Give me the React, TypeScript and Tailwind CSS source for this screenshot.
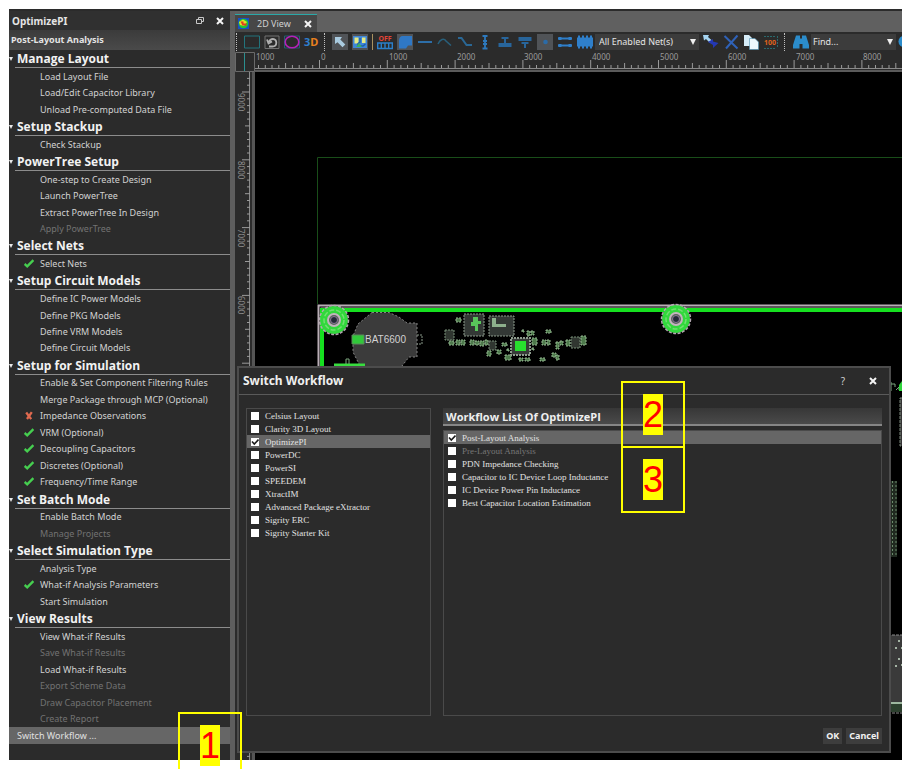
import { useState, type ReactNode } from 'react';
import clsx from 'clsx';

type Status = 'ok' | 'error';

interface Step {
  label: string;
  status?: Status;
  disabled?: boolean;
}

interface StepGroup {
  title: string;
  steps: Step[];
}

const groups: StepGroup[] = [
  {
    title: 'Manage Layout',
    steps: [
      { label: 'Load Layout File' },
      { label: 'Load/Edit Capacitor Library' },
      { label: 'Unload Pre-computed Data File' },
    ],
  },
  { title: 'Setup Stackup', steps: [{ label: 'Check Stackup' }] },
  {
    title: 'PowerTree Setup',
    steps: [
      { label: 'One-step to Create Design' },
      { label: 'Launch PowerTree' },
      { label: 'Extract PowerTree In Design' },
      { label: 'Apply PowerTree', disabled: true },
    ],
  },
  { title: 'Select Nets', steps: [{ label: 'Select Nets', status: 'ok' }] },
  {
    title: 'Setup Circuit Models',
    steps: [
      { label: 'Define IC Power Models' },
      { label: 'Define PKG Models' },
      { label: 'Define VRM Models' },
      { label: 'Define Circuit Models' },
    ],
  },
  {
    title: 'Setup for Simulation',
    steps: [
      { label: 'Enable & Set Component Filtering Rules' },
      { label: 'Merge Package through MCP (Optional)' },
      { label: 'Impedance Observations', status: 'error' },
      { label: 'VRM (Optional)', status: 'ok' },
      { label: 'Decoupling Capacitors', status: 'ok' },
      { label: 'Discretes (Optional)', status: 'ok' },
      { label: 'Frequency/Time Range', status: 'ok' },
    ],
  },
  {
    title: 'Set Batch Mode',
    steps: [{ label: 'Enable Batch Mode' }, { label: 'Manage Projects', disabled: true }],
  },
  {
    title: 'Select Simulation Type',
    steps: [
      { label: 'Analysis Type' },
      { label: 'What-if Analysis Parameters', status: 'ok' },
      { label: 'Start Simulation' },
    ],
  },
  {
    title: 'View Results',
    steps: [
      { label: 'View What-if Results' },
      { label: 'Save What-if Results', disabled: true },
      { label: 'Load What-if Results' },
      { label: 'Export Scheme Data', disabled: true },
      { label: 'Draw Capacitor Placement', disabled: true },
      { label: 'Create Report', disabled: true },
    ],
  },
];

const products = [
  'Celsius Layout',
  'Clarity 3D Layout',
  'OptimizePI',
  'PowerDC',
  'PowerSI',
  'SPEEDEM',
  'XtractIM',
  'Advanced Package eXtractor',
  'Sigrity ERC',
  'Sigrity Starter Kit',
];

const workflows = [
  'Post-Layout Analysis',
  'Pre-Layout Analysis',
  'PDN Impedance Checking',
  'Capacitor to IC Device Loop Inductance',
  'IC Device Power Pin Inductance',
  'Best Capacitor Location Estimation',
];

function CloseIcon() {
  return (
    <svg viewBox="0 0 8 8" className="h-2 w-2" stroke="#f4f4f4" strokeWidth="2" aria-hidden="true">
      <path d="M1 1l6 6M7 1L1 7" />
    </svg>
  );
}

function StatusIcon({ status }: { status?: Status }) {
  return (
    <svg viewBox="0 0 10 10" className="h-[10px] w-[10px] shrink-0" fill="none" aria-hidden="true">
      {status === 'ok' && <path d="M.6 5L3.200 7.300 9.400 1.200" stroke="#46cf50" strokeWidth="2.400" />}
      {status === 'error' && (
        <path d="M2.200 1.500l5 6.600M7.800 1.200L3 8" stroke="#e0694f" strokeWidth="2.300" />
      )}
    </svg>
  );
}

function StepSection({ group }: { group: StepGroup }) {
  const [open, setOpen] = useState(true);

  return (
    <section className="contents">
      <h2 className="flex shrink-0 grow basis-[18px]">
        <button
          onClick={() => setOpen(!open)}
          aria-expanded={open}
          className='flex flex-1 items-stretch text-left font-["Open_Sans",sans-serif] text-[12px] leading-[18px] font-bold text-[#f2f2f2]'
        >
          <svg viewBox="0 0 6 18" className="h-[18px] w-[6px]" fill="#e8e8e8" aria-hidden="true">
            <path d="M0 7h4L2 11z" />
          </svg>
          <span className="h-[18px] flex-1 border-b border-[#8c8c8c] pl-[2px]">{group.title}</span>
        </button>
      </h2>
      {open && (
        <ul className="contents">
          {group.steps.map((step) => (
            <li key={step.label} className="flex shrink-0 grow basis-4">
              <button
                disabled={step.disabled}
                className="flex flex-1 items-center gap-[6px] pl-[15px] text-[9px] leading-4 text-[#d2d2d2] disabled:text-[#727272]"
              >
                <StatusIcon status={step.status} />
                {step.label}
              </button>
            </li>
          ))}
        </ul>
      )}
    </section>
  );
}

function Sidebar({ onSwitch }: { onSwitch: () => void }) {
  return (
    <aside className="flex w-[226px] shrink-0 flex-col border-r-5 border-[#5e5e5e] bg-[#2b2b2b]">
      <header className="flex h-[19px] items-center gap-3 bg-[#303030] pr-[6px] pl-[3px]">
        <h1 className="flex-1 text-[10px] leading-4 font-bold text-[#e4e4e4]">OptimizePI</h1>
        <button aria-label="Float panel">
          <svg viewBox="0 0 8 8" className="h-2 w-2" fill="none" stroke="#c8c8c8" aria-hidden="true">
            <path d="M2.500 2V.5h5v4H6M.5 2.500h5v4h-5z" />
          </svg>
        </button>
        <button aria-label="Close panel">
          <CloseIcon />
        </button>
      </header>
      <p className="h-[20px] bg-linear-to-b from-[#3b3b3b] to-[#4a4a4a] pl-[2px] text-[9px] leading-5 font-bold text-[#e4e4e4]">
        Post-Layout Analysis
      </p>
      <nav className="flex flex-1 flex-col pb-4">
        {groups.map((group) => (
          <StepSection key={group.title} group={group} />
        ))}
        <button
          onClick={onSwitch}
          className="shrink-0 grow basis-4 bg-[#666] pl-2 text-left text-[9px] leading-4 text-[#e0e0e0]"
        >
          Switch Workflow ...
        </button>
      </nav>
    </aside>
  );
}

interface ToolProps {
  label: string;
  pressed?: boolean;
  children: ReactNode;
}

function Tool({ label, pressed, children }: ToolProps) {
  return (
    <button aria-label={label} className={clsx('h-4 w-4 shrink-0', pressed && 'bg-[#505357]')}>
      <svg viewBox="0 0 16 16" className="h-4 w-4" fill="none" aria-hidden="true">
        {children}
      </svg>
    </button>
  );
}

function Handle() {
  return <span className="h-[18px] w-px shrink-0 border-l border-dotted border-[#c0c0c0]" />;
}

function DropArrow() {
  return (
    <svg viewBox="0 0 6 6" className="h-[6px] w-[6px]" fill="#f0f0f0" aria-hidden="true">
      <path d="M0 0h6L3 6z" />
    </svg>
  );
}

function Toolbar() {
  return (
    <div className="flex h-[20px] items-center gap-1 overflow-hidden bg-[#2b2b2b] pl-[1px]">
      <Handle />
      <span className="flex items-center gap-1 pl-[3px]">
        <Tool label="Select rectangle">
          <path d="M.5 2h15v12H.5z" stroke="#23747c" />
        </Tool>
        <Tool label="Undo">
          <path d="M1 2h14v12.500H1z" stroke="#727272" />
          <path d="M5 12.500h3.500c5 0 5-7.500.5-7.500-2.500 0-3.500 1.500-4 3M3 5.500l1.500 4 3.500-2" stroke="#b0b0b0" strokeWidth="1.800" />
        </Tool>
        <Tool label="Select ellipse">
          <path d="M.5 2h15v12H.5z" stroke="#245d72" />
          <ellipse cx="8" cy="8" rx="6.800" ry="5.800" stroke="#b521b8" strokeWidth="1.600" />
        </Tool>
        <button aria-label="3D view" className="flex h-4 w-4 text-[11px] leading-4 font-bold">
          <span className="text-[#2e7fd0]">3</span>
          <span className="text-[#e8801e]">D</span>
        </button>
      </span>
      <Handle />
      <span className="flex items-center gap-1 pl-[3px]">
        <Tool label="Pointer" pressed>
          <path d="M3 3h7L8.300 5.400l5 5-2.800 2.800-5-5L3 10z" fill="#a9cbe0" />
        </Tool>
        <Tool label="Layout" pressed>
          <path d="M1 2h14v12H1z" fill="#3f86d8" />
          <path d="M2.500 3.500h4v6h-4zM10 3.500h3.500V9H10z" fill="#e4ea86" />
          <path d="M8 4v4l-2 1.500V12h5l2.500-2" stroke="#1f5fa8" strokeWidth="1.500" />
          <path d="M4 13l3-4 3 4z" fill="#3cae62" />
        </Tool>
      </span>
      <span className="h-4 w-px shrink-0 bg-[#a8915f]" />
      <span className="flex items-center gap-1">
        <Tool label="Traces off">
          <text x="8" y="7" textAnchor="middle" fontSize="7" fontWeight="700" fill="#e04438">
            OFF
          </text>
          <path d="M.7 9h14.600v5.500H.7zM4.300 9v5.500M8 9v5.500M11.700 9v5.500" stroke="#2b7fca" strokeWidth="1.400" />
        </Tool>
        <Tool label="Shape" pressed>
          <path d="M5.500 2H15v9.500h-4L9 14.500H2V6.500C2 4 3.500 2 5.500 2z" fill="#2f78c6" />
        </Tool>
        <Tool label="Line">
          <path d="M1 8h14" stroke="#2d6ea8" strokeWidth="2" />
        </Tool>
        <Tool label="Arc">
          <path d="M1 10c2-5 6-6 8-3l5 4.500" stroke="#28607c" strokeWidth="1.500" />
        </Tool>
        <Tool label="Curve">
          <path d="M1 4h3.500l5 7H15" stroke="#2a6795" strokeWidth="2" />
        </Tool>
        <Tool label="Via">
          <path d="M8 2v13M5.500 2h5M5.500 14.500h5M6 7h4M6 10h4" stroke="#2d79bd" strokeWidth="1.800" />
        </Tool>
        <Tool label="Top layer">
          <path d="M1.500 9h13v4h-13zM4.500 3h7v2h-7zM7 5h2v4H7z" fill="#28659b" />
        </Tool>
        <Tool label="Bottom layer">
          <path d="M1.500 3h13v4h-13zM4.500 8h7v2h-7zM7 10h2v4H7z" fill="#28659b" />
        </Tool>
        <Tool label="Node" pressed>
          <circle cx="8.500" cy="8" r="2.300" fill="#2b6ba8" />
        </Tool>
        <Tool label="Net pair">
          <path d="M1 4.500h14M1 11.500h14" stroke="#2f7fca" strokeWidth="2" />
          <path d="M1.500 3h3v3h-3zM11.500 3h3v3h-3zM1.500 10h3v3h-3zM11.500 10h3v3h-3z" fill="#2f7fca" />
        </Tool>
        <Tool label="Component">
          <path d="M0 3.500h16v9H0z" fill="#2f7fca" />
          <path d="M2 1.500v13M6 1.500v13M10 1.500v13M14 1.500v13" stroke="#2f7fca" strokeWidth="2" />
        </Tool>
      </span>
      <span className="relative -ml-[2px] flex h-4 w-[104px] shrink-0 items-center">
        <select
          aria-label="Nets"
          className="h-4 w-full appearance-none bg-[#3c3c3c] pl-1 text-[9px] leading-4 text-[#e4e4e4]"
        >
          <option>All Enabled Net(s)</option>
          <option>All Nets</option>
        </select>
        <span className="pointer-events-none absolute right-[3px]">
          <DropArrow />
        </span>
      </span>
      <span className="flex items-center gap-1 pr-px">
        <Tool label="Link nets">
          <path d="M0 1h6L5 3l4 3.500L7 9 3 5 1 6.500z" fill="#a5d3f0" />
          <path d="M5 8l5-3v2.500l5.500 1.500-5.500 5v-3z" fill="#2438b4" />
        </Tool>
        <Tool label="Delete">
          <path d="M1.500 2l13 12.500M14.500 1.500L3 14.500" stroke="#2f62b8" strokeWidth="2" />
        </Tool>
        <Tool label="Copy">
          <path d="M1 1h5l3 3v8H1z" fill="#d5ecf8" />
          <path d="M6.500 4.500H12L15.500 8v7.500h-9z" fill="#eef8fd" stroke="#4a8fb0" strokeWidth=".6" />
        </Tool>
        <Tool label="Scale 100">
          <path d="M1 2.500h12M14.500 2v12M1 14.500h12" stroke="#2a6a6e" strokeDasharray="2 1" />
          <text x="7" y="11" textAnchor="middle" fontSize="7" fontWeight="700" fill="#e0641c">
            100
          </text>
        </Tool>
      </span>
      <Handle />
      <span className="flex min-w-0 flex-1 items-center gap-[2px] pl-[4px]">
        <svg viewBox="0 0 16 16" className="h-4 w-4 shrink-0" fill="#2b8ccb" aria-hidden="true">
          <path d="M3 1.500h4v3h2v-3h4l3 9.500v3.500H9.500V10h-3v4.500H0V11z" />
        </svg>
        <span className="flex h-4 min-w-0 flex-1 items-center bg-[#3c3c3c] pr-[3px]">
          <input
            aria-label="Find"
            placeholder="Find..."
            className="h-4 w-full min-w-0 flex-1 pl-[2px] text-[9px] leading-4 text-[#e4e4e4] outline-none placeholder:text-[#e4e4e4]"
          />
          <button aria-label="Recent searches" className="shrink-0">
            <DropArrow />
          </button>
        </span>
        <svg viewBox="0 0 4 16" className="h-4 w-[4px] shrink-0" fill="#2b8ccb" aria-hidden="true">
          <circle cx="6" cy="7.500" r="5.500" />
        </svg>
      </span>
    </div>
  );
}

// one thousand mils on screen
const UNIT = 67.8;

function tickHeight(i: number) {
  if (i % 10 === 0) return 8;
  return i % 5 === 0 ? 5 : 3;
}

function TopRuler() {
  const ticks = Array.from({ length: 240 }, (_, i) => i - 9);
  return (
    <svg className="h-[20px] min-w-0 flex-1 border-b-2 border-[#5a5a5a] bg-[#2b2b2b]" aria-hidden="true">
      <path d="M0 16.500h3000" stroke="#8a8a8a" />
      {ticks.map((t) => (
        <path
          key={t}
          d={`M${(64.5 + (t * UNIT) / 10).toFixed(1)} 16v-${tickHeight(Math.abs(t))}`}
          stroke="#9a9a9a"
        />
      ))}
      <text x="1" y="8" fontSize="8" fill="#9a9a9a">1000</text>
      {Array.from({ length: 9 }, (_, i) => (
        <text key={i} x={Math.round(66 + i * UNIT)} y="8" fontSize="8" fill="#9a9a9a">
          {i * 1000}
        </text>
      ))}
    </svg>
  );
}

function LeftRuler() {
  const ticks = Array.from({ length: 200 }, (_, i) => i - 2);
  return (
    <svg className="w-[20px] shrink-0 border-r-3 border-[#555] bg-[#2b2b2b]" aria-hidden="true">
      <path d="M14.500 0v3000" stroke="#8a8a8a" />
      {ticks.map((t) => (
        <path
          key={t}
          d={`M15 ${(20 + (t * UNIT) / 10).toFixed(1)}h-${tickHeight(Math.abs(t))}`}
          stroke="#9a9a9a"
        />
      ))}
      {[9000, 8000, 7000, 6000].map((v, i) => (
        <text
          key={v}
          transform={`translate(3 ${Math.round(21 + i * UNIT)}) rotate(90)`}
          fontSize="8"
          fill="#8e8e8e"
        >
          {v}
        </text>
      ))}
    </svg>
  );
}

function MountingHole({ x, y }: { x: number; y: number }) {
  return (
    <g transform={`translate(${x} ${y})`}>
      <circle r="14" fill="#31d83c" />
      <circle r="14.500" stroke="#b5a7b2" strokeWidth="1.500" strokeDasharray="3 1.500" />
      <circle r="10" stroke="#72df70" strokeWidth="1.500" strokeDasharray="5 2" />
      <circle r="6" fill="#59645a" stroke="#c4b3bf" strokeWidth="2" />
      <circle r="3.500" fill="#252b38" stroke="#8e7b9a" />
    </g>
  );
}

// small passives: x, y, width, height
const passives = [
  [456, 318, 5, 4], [449, 341, 5, 4], [456, 340, 4, 5], [461, 340, 4, 5], [470, 340, 4, 5],
  [475, 341, 4, 4], [480, 341, 4, 5], [485, 340, 3, 5], [527, 331, 3, 5], [531, 331, 3, 4],
  [532, 338, 5, 7], [546, 330, 5, 3], [542, 340, 4, 5], [547, 340, 3, 5], [502, 343, 5, 3],
  [556, 342, 3, 7], [560, 341, 3, 4], [566, 340, 4, 6], [581, 336, 5, 9], [487, 351, 4, 5],
  [497, 350, 4, 4], [505, 355, 6, 5], [519, 358, 4, 3], [525, 358, 5, 3], [540, 358, 5, 3],
  [552, 353, 4, 4], [556, 355, 3, 5], [507, 349, 2, 2], [532, 348, 2, 2], [522, 330, 2, 2],
];

function Board() {
  return (
    <svg className="absolute inset-0 h-full w-full" fill="none" aria-hidden="true">
      <g transform="translate(-255 -72)">
        <path d="M3000 157.500H317.500V304" stroke="#194d19" />
        <path d="M3000 305.500H318.500V740" stroke="#b9aeb6" strokeWidth="2" />
        <path d="M3000 307.500H320.500" stroke="#5d545b" strokeWidth="2" />
        <path d="M3000 310H322V740" stroke="#16e020" strokeWidth="4" />

        <path
          d="M372 312.500h17l10 4.500 8 6h10v34h-8l-7 9-8 6h-26l-9-8-6-12v-16l5-12z"
          fill="#3b3b3b"
          stroke="#848484"
          strokeDasharray="2 2"
        />
        <path d="M417 335h5v9h-5" stroke="#8a9a8a" strokeDasharray="2 1" />
        <path d="M352 335h12v9h-12z" fill="#31c83a" stroke="#5b8a5b" />
        <text x="365" y="343" fontSize="10" fill="#d2d2d2" fontFamily="Liberation Sans">
          BAT6600
        </text>
        <path d="M334 365h31" stroke="#38dd3f" strokeWidth="3" />
        <path d="M346 364v-5h3v5" stroke="#7da77e" />
        <MountingHole x={334} y={320} />
        <MountingHole x={676} y={319} />

        <path d="M464 314h20v22h-20zM489 316h25v20h-25z" fill="#333835" stroke="#8e9c8e" strokeDasharray="2 1" />
        <path d="M473 317h5v14h-3v-5h-4v-4h2zM478 321h3v3h-3z" fill="#58c45a" />
        <path d="M492 318h4v6h10v3h-14z" fill="#8db08c" />
        <path d="M511 338h19v17h-19z" fill="#373c38" stroke="#8e9c8e" strokeWidth="2" strokeDasharray="2 1" />
        <path d="M515 341h11v10h-11z" fill="#28e02e" />
        <path d="M445 330h9v10h-9zM489 341h7v9h-7zM571 337h9v11h-9z" fill="#303630" stroke="#789078" strokeDasharray="2 1" />
        {passives.map(([x, y, w, h]) => (
          <g key={`${x}-${y}`}>
            <rect x={x} y={y} width={w} height={h} fill="#4e7a4c" />
            <rect x={x} y={y} width={w} height={h} stroke="#94b891" strokeDasharray="2 1" />
          </g>
        ))}

        <path d="M891 382v9M891 384h4v3M896 390l3-3v3h4" stroke="#7da77e" />
        <path d="M899 385l3-4v10h-3z" fill="#2fd63c" />
        <path d="M902 398h-2v48h2" fill="#353535" stroke="#7f8b7f" strokeDasharray="3 1" />
        <path d="M890 481h7v76h-7z" fill="#202a20" />
        <path d="M892.500 481v76M896 481v76" stroke="#6b8a6c" strokeDasharray="2 2" />
        <path d="M880 635h30v67h-30z" fill="#3a3a3a" />
        <path d="M880 635h30M880 713h30" stroke="#8b8b8b" strokeDasharray="3 1" />
        <path d="M880 702h30v10h-30z" fill="#2c402e" />
        <path d="M880 703h30" stroke="#9db79f" strokeWidth="2" />
        <path d="M898 641h2M895 648h2M901 648h1M898 659h2M895 666h2M901 665h1" stroke="#a5b5a5" strokeWidth="2" />
      </g>
    </svg>
  );
}

interface CheckRowProps {
  label: string;
  checked: boolean;
  disabled?: boolean;
  onChange: () => void;
}

function CheckRow({ label, checked, disabled, onChange }: CheckRowProps) {
  return (
    <li className={clsx('h-[13px]', checked && 'bg-[#666]')}>
      <label
        className={clsx(
          'flex h-[13px] items-center gap-[6px] pl-1 font-["Liberation_Serif",serif] text-[9px] leading-3',
          disabled ? 'text-[#777]' : 'text-[#e2e2e2]',
        )}
      >
        <span className="relative flex h-2 w-2 shrink-0">
          <input
            type="checkbox"
            checked={checked}
            disabled={disabled}
            onChange={onChange}
            className="h-2 w-2 appearance-none bg-white"
          />
          {checked && (
            <svg viewBox="0 0 8 8" className="pointer-events-none absolute inset-0 h-2 w-2" fill="none" aria-hidden="true">
              <path d="M1 3.500L3.300 6 7.500 1.500" stroke="#1d1d1d" strokeWidth="1.600" />
            </svg>
          )}
        </span>
        {label}
      </label>
    </li>
  );
}

function SwitchWorkflowDialog({ onClose }: { onClose: () => void }) {
  const [product, setProduct] = useState('OptimizePI');
  const [workflow, setWorkflow] = useState('Post-Layout Analysis');

  return (
    <div
      role="dialog"
      aria-labelledby="dialog-title"
      className="absolute top-[357px] right-[11px] bottom-[7px] left-[2px] flex flex-col border-2 border-[#4c4c4c] bg-[#2b2b2b]"
    >
      <header className="flex h-[27px] items-center gap-6 border-b border-[#5a5a5a] pr-3 pl-1">
        <h2 id="dialog-title" className="flex-1 text-[12px] leading-5 font-bold text-[#efefef]">
          Switch Workflow
        </h2>
        <button aria-label="Help" className="text-[10px] leading-4 text-[#d0d0d0]">
          ?
        </button>
        <button aria-label="Close" onClick={onClose}>
          <CloseIcon />
        </button>
      </header>

      <div className="flex min-h-0 flex-1 gap-3 px-[7px] pt-[13px]">
        <ul className="w-[185px] shrink-0 border border-[#4a4a4a]">
          {products.map((name) => (
            <CheckRow
              key={name}
              label={name}
              checked={name === product}
              onChange={() => setProduct(name)}
            />
          ))}
        </ul>
        <div className="flex flex-1 flex-col gap-1">
          <h3 className='h-[18px] border-b-2 border-[#868686] bg-linear-to-b from-[#373737] to-[#4a4a4a] pl-[3px] font-["Open_Sans",sans-serif] text-[11px] leading-[18px] font-bold text-[#efefef]'>
            Workflow List Of {product}
          </h3>
          <ul className="flex-1 border border-[#4a4a4a]">
            {workflows.map((name) => (
              <CheckRow
                key={name}
                label={name}
                checked={name === workflow}
                disabled={name === 'Pre-Layout Analysis'}
                onChange={() => setWorkflow(name)}
              />
            ))}
          </ul>
        </div>
      </div>

      <footer className="flex justify-end gap-1 px-[7px] pt-3 pb-[7px] text-[9px] leading-4 font-bold text-[#f2f2f2]">
        <button onClick={onClose} className="h-4 bg-[#3d3d3d] px-[3px]">
          OK
        </button>
        <button onClick={onClose} className="h-4 bg-[#3d3d3d] px-[3px]">
          Cancel
        </button>
      </footer>
    </div>
  );
}

// numbered marker for the tutorial steps
function Callout({ n, className }: { n: number; className: string }) {
  return (
    <div
      className={clsx(
        'pointer-events-none absolute flex h-[67px] w-[64px] justify-center border-2 border-[#ff0] pt-[11px] font-["Liberation_Sans",sans-serif] text-[36px] leading-[41px] text-[#f00]',
        className,
      )}
    >
      <span className="h-[41px] bg-[#ff0]">{n}</span>
    </div>
  );
}

export default function App() {
  const [dialogOpen, setDialogOpen] = useState(true);

  return (
    <div className='relative flex min-h-screen overflow-hidden bg-white p-[9px] font-["Noto_Sans",sans-serif]'>
      <div className="flex min-w-0 flex-1 border-t-2 border-[#2b2b2b]">
        <Sidebar onSwitch={() => setDialogOpen(true)} />

        <main className="relative -mt-[2px] flex min-w-0 flex-1 flex-col pt-[2px]">
          <div className="flex h-[21px] items-end bg-[#606060]">
            <div className="flex h-[18px] w-[82px] items-center gap-2 border-t border-[#2aa8a8] bg-[#474747] pr-[5px] pl-[3px]">
              <svg viewBox="0 0 11 11" className="h-[11px] w-[11px] shrink-0" aria-hidden="true">
                <path d="M0 0h11v11H0z" fill="#1650c8" />
                <circle cx="5.500" cy="5.500" r="4.800" fill="#22c531" />
                <path d="M1 4l4-2.500L9 4 6 8 2 7z" fill="#e5df25" />
                <path d="M2.500 3.500h3v2h3v2h-4z" fill="#e23b20" />
              </svg>
              <span className="flex-1 text-[9px] leading-4 whitespace-nowrap text-[#d0d0d0]">2D View</span>
              <button aria-label="Close tab">
                <CloseIcon />
              </button>
            </div>
          </div>
          <Toolbar />
          <div className="flex">
            <svg viewBox="0 0 20 20" className="h-[20px] w-[20px] bg-[#2b2b2b]" fill="none" aria-hidden="true">
              <path d="M.5.500h19v19H.5z" stroke="#6a6a6a" />
              <path d="M9.500 1v18" stroke="#2b8f8f" />
            </svg>
            <TopRuler />
          </div>
          <div className="flex flex-1">
            <LeftRuler />
            <div className="relative flex-1 overflow-hidden bg-black">
              <Board />
            </div>
          </div>
          {dialogOpen && <SwitchWorkflowDialog onClose={() => setDialogOpen(false)} />}
        </main>
      </div>

      <Callout n={1} className="-bottom-[10px] left-[178px]" />
      <Callout n={2} className="top-[381px] left-[621px]" />
      <Callout n={3} className="top-[446px] left-[621px]" />
    </div>
  );
}
